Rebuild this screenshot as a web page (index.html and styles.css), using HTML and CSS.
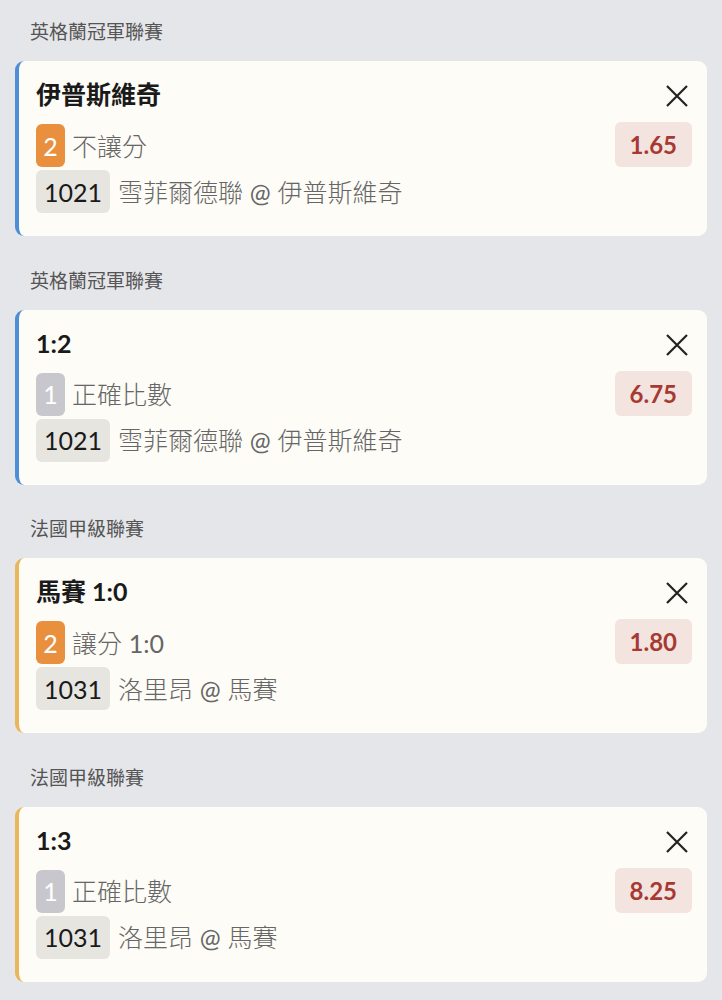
FILE: index.html
```html
<!DOCTYPE html>
<html lang="zh-Hant">
<head>
<meta charset="utf-8">
<link rel="stylesheet" href="styles.css">
</head>
<body>
<div class="list">
  <section class="group">
    <h2 class="league">英格蘭冠軍聯賽</h2>
    <div class="card card-blue">
      <div class="title">伊普斯維奇</div>
      <button class="close" aria-label="close"><svg viewBox="0 0 24 24" width="24" height="24"><path d="M2 2L22 22M22 2L2 22" stroke="#222" stroke-width="2.2" fill="none"/></svg></button>
      <div class="market"><span class="pick pick-orange">2</span><span class="mtext">不讓分</span></div>
      <div class="odds">1.65</div>
      <div class="match"><span class="code">1021</span><span class="mtext">雪菲爾德聯 <span class="lat">@</span> 伊普斯維奇</span></div>
    </div>
  </section>
  <section class="group">
    <h2 class="league">英格蘭冠軍聯賽</h2>
    <div class="card card-blue">
      <div class="title">1:2</div>
      <button class="close" aria-label="close"><svg viewBox="0 0 24 24" width="24" height="24"><path d="M2 2L22 22M22 2L2 22" stroke="#222" stroke-width="2.2" fill="none"/></svg></button>
      <div class="market"><span class="pick pick-gray">1</span><span class="mtext">正確比數</span></div>
      <div class="odds">6.75</div>
      <div class="match"><span class="code">1021</span><span class="mtext">雪菲爾德聯 <span class="lat">@</span> 伊普斯維奇</span></div>
    </div>
  </section>
  <section class="group">
    <h2 class="league">法國甲級聯賽</h2>
    <div class="card card-yellow">
      <div class="title">馬賽 1:0</div>
      <button class="close" aria-label="close"><svg viewBox="0 0 24 24" width="24" height="24"><path d="M2 2L22 22M22 2L2 22" stroke="#222" stroke-width="2.2" fill="none"/></svg></button>
      <div class="market"><span class="pick pick-orange">2</span><span class="mtext">讓分 <span class="lat">1:0</span></span></div>
      <div class="odds">1.80</div>
      <div class="match"><span class="code">1031</span><span class="mtext">洛里昂 <span class="lat">@</span> 馬賽</span></div>
    </div>
  </section>
  <section class="group">
    <h2 class="league">法國甲級聯賽</h2>
    <div class="card card-yellow">
      <div class="title">1:3</div>
      <button class="close" aria-label="close"><svg viewBox="0 0 24 24" width="24" height="24"><path d="M2 2L22 22M22 2L2 22" stroke="#222" stroke-width="2.2" fill="none"/></svg></button>
      <div class="market"><span class="pick pick-gray">1</span><span class="mtext">正確比數</span></div>
      <div class="odds">8.25</div>
      <div class="match"><span class="code">1031</span><span class="mtext">洛里昂 <span class="lat">@</span> 馬賽</span></div>
    </div>
  </section>
</div>
</body>
</html>
```

FILE: styles.css
```css
html, body {
  margin: 0;
  padding: 0;
  background: #e5e6ea;
}
body {
  font-family: Lato, "Noto Sans CJK TC", sans-serif;
  color: #222;
}
.list {
  display: flex;
  flex-direction: column;
  gap: 32.5px;
  padding: 20px 15px 0 15px;
}
.league {
  margin: 0 0 17px 15px;
  font-size: 19px;
  line-height: 24px;
  font-weight: 400;
  color: #555;
}
.card {
  background: #fdfcf6;
  border-radius: 9px;
  border-left: 4px solid #4d8fd6;
  height: 175px;
  box-sizing: border-box;
  padding: 16px 15px 0 17px;
  display: grid;
  grid-template-columns: 1fr auto;
  grid-template-rows: auto auto auto;
  align-content: start;
}
.card-yellow { border-left-color: #e9b65c; }
.title {
  font-size: 25px;
  font-weight: 700;
  line-height: 34px;
  height: 34px;
  color: #1a1a1a;
}
.close {
  background: none;
  border: 0;
  padding: 0;
  width: 24px;
  height: 24px;
  margin: 7px 3px 0 0;
  justify-self: end;
  align-self: start;
  display: flex;
}
.market, .match {
  display: flex;
  align-items: center;
  gap: 7px;
}
.market { margin-top: 13px; height: 43px; }
.match { margin-top: 3px; height: 43px; grid-column: 1 / 3; gap: 8px; }
.pick {
  display: flex;
  align-items: center;
  justify-content: center;
  width: 29px;
  height: 43px;
  border-radius: 6px;
  color: #fff;
  font-size: 25px;
}
.pick-orange { background: #e8903e; }
.pick-gray { background: #c8c7cd; }
.code {
  display: flex;
  align-items: center;
  height: 43px;
  padding: 0 8px;
  border-radius: 6px;
  background: #e6e5e0;
  color: #1a1a1a;
  font-size: 25px;
}
.mtext {
  font-size: 25px;
  font-weight: 300;
  color: #666;
  position: relative;
  top: -1px;
}
.lat {
  font-weight: 400;
}
.odds {
  margin-top: 11px;
  height: 45px;
  box-sizing: border-box;
  padding: 0 15px;
  display: flex;
  align-items: center;
  align-self: start;
  border-radius: 6px;
  background: #f3e4df;
  color: #a63a33;
  font-size: 24px;
  font-weight: 700;
}
```
